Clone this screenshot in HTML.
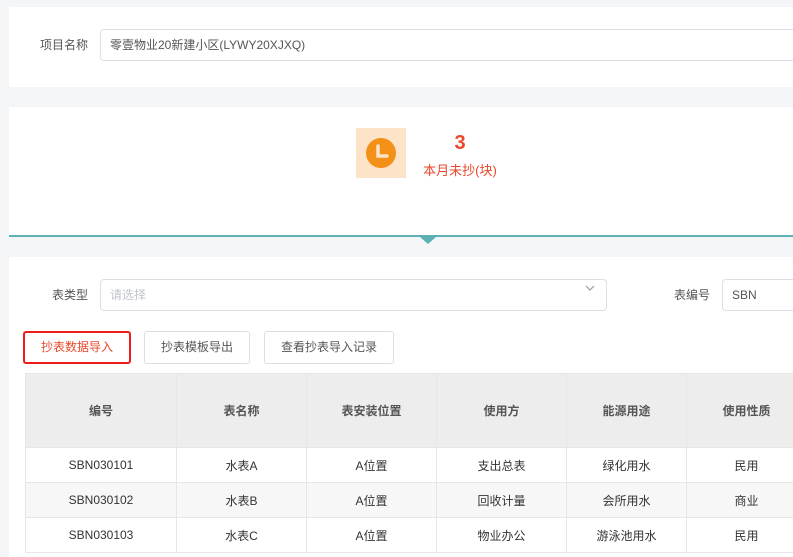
<!DOCTYPE html>
<html><head><meta charset="utf-8"><style>
*{margin:0;padding:0;box-sizing:border-box}
body{width:793px;height:551px;overflow:hidden;background:#f4f5f7;font-family:"Liberation Sans","Noto Sans CJK SC",sans-serif;font-size:12px;color:#555;position:relative}
.abs{position:absolute}
.panel{position:absolute;left:9px;right:0;background:#fff}
.inp{position:absolute;border:1px solid #dcdfe6;border-radius:4px;background:#fff;padding-left:9px;line-height:30px;font-size:12px;color:#555}
.btn{position:absolute;top:331px;height:33px;border:1px solid #dcdfe6;border-radius:3px;background:#fff;text-align:center;line-height:31px;color:#555}
table{position:absolute;left:25px;top:373px;width:781px;border-collapse:collapse;table-layout:fixed}
td,th{border:1px solid #e6e6e6;text-align:center;font-size:12px;color:#333}
th{background:#ededed;height:74px;font-weight:bold;color:#555}
td{height:35px}
tr.alt td{background:#f7f7f7}
</style></head><body>
<div class="panel" style="top:7px;height:80px"></div>
<div class="abs" style="left:40px;top:36px;color:#555">项目名称</div>
<div class="inp" style="left:100px;top:29px;width:720px;height:32px">零壹物业20新建小区(LYWY20XJXQ)</div>

<div class="panel" style="top:107px;height:130px;border-bottom:2px solid #5bb1b3"></div>
<div class="abs" style="left:420px;top:237px;width:0;height:0;border-left:8px solid transparent;border-right:8px solid transparent;border-top:7px solid #5bb1b3"></div>
<div class="abs" style="left:356px;top:128px;width:50px;height:50px;background:#fde3c8">
<svg width="50" height="50"><circle cx="25" cy="25" r="15" fill="#f39018"/><path d="M22 18 V28 H31" stroke="#fde3c8" stroke-width="3.5" fill="none" stroke-linecap="round"/></svg></div>
<div class="abs" style="left:420px;top:132px;width:80px;text-align:center;color:#e8472a;font-weight:bold;font-size:20px">3</div>
<div class="abs" style="left:420px;top:160px;width:80px;text-align:center;color:#e8472a;font-size:13px">本月未抄(块)</div>

<div class="panel" style="top:257px;height:300px"></div>
<div class="abs" style="left:52px;top:286px">表类型</div>
<div class="inp" style="left:100px;top:279px;width:507px;height:32px;color:#c0c4cc">请选择</div>
<svg class="abs" style="left:584px;top:283px" width="12" height="10"><path d="M2 3 L6 7 L10 3" stroke="#999" fill="none" stroke-width="1.2"/></svg>
<div class="abs" style="left:674px;top:286px">表编号</div>
<div class="inp" style="left:722px;top:279px;width:100px;height:32px">SBN</div>

<div class="btn" style="left:23px;width:108px;border:2px solid #f01c1c;color:#e8472a;line-height:29px">抄表数据导入</div>
<div class="btn" style="left:144px;width:106px">抄表模板导出</div>
<div class="btn" style="left:264px;width:130px">查看抄表导入记录</div>

<table>
<colgroup><col style="width:151px"><col style="width:130px"><col style="width:130px"><col style="width:130px"><col style="width:120px"><col style="width:120px"></colgroup>
<tr><th>编号</th><th>表名称</th><th>表安装位置</th><th>使用方</th><th>能源用途</th><th>使用性质</th></tr>
<tr><td>SBN030101</td><td>水表A</td><td>A位置</td><td>支出总表</td><td>绿化用水</td><td>民用</td></tr>
<tr class="alt"><td>SBN030102</td><td>水表B</td><td>A位置</td><td>回收计量</td><td>会所用水</td><td>商业</td></tr>
<tr><td>SBN030103</td><td>水表C</td><td>A位置</td><td>物业办公</td><td>游泳池用水</td><td>民用</td></tr>
</table>
</body></html>
